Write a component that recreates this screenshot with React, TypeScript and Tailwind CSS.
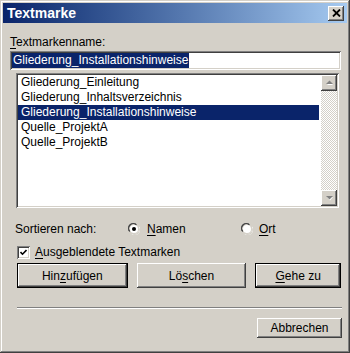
import React from "react";

const raised =
  "shadow-[inset_-1px_-1px_0_#404040,inset_1px_1px_0_#ffffff,inset_-2px_-2px_0_#808080,inset_2px_2px_0_#d4d0c8]";
const sunken =
  "shadow-[inset_1px_1px_0_#808080,inset_-1px_-1px_0_#ffffff,inset_2px_2px_0_#404040,inset_-2px_-2px_0_#d4d0c8]";

function U({ children }: { children: React.ReactNode }) {
  return <span className="underline underline-offset-[2px]">{children}</span>;
}

function Radio({ checked }: { checked?: boolean }) {
  return (
    <svg width="12" height="12" viewBox="0 0 12 12" className="shrink-0">
      <path d="M1 8 A5.2 5.2 0 0 1 8 1" stroke="#808080" strokeWidth="1.2" fill="none" />
      <path d="M2 8.5 A4.2 4.2 0 0 1 8.5 2" stroke="#404040" strokeWidth="1.2" fill="none" />
      <circle cx="6" cy="6" r="4" fill="#ffffff" />
      <path d="M11 4 A5.2 5.2 0 0 1 4 11" stroke="#ffffff" strokeWidth="1.2" fill="none" />
      <path d="M10 3.5 A4.2 4.2 0 0 1 3.5 10" stroke="#d4d0c8" strokeWidth="1.2" fill="none" />
      {checked && <circle cx="6" cy="6" r="2" fill="#000000" />}
    </svg>
  );
}

function Btn({
  children,
  def,
  className,
}: {
  children: React.ReactNode;
  def?: boolean;
  className?: string;
}) {
  if (def) {
    return (
      <div className={`border border-black bg-[#d4d0c8] ${className ?? ""}`}>
        <div className={`w-full h-full flex items-center justify-center ${raised}`}>{children}</div>
      </div>
    );
  }
  return (
    <div className={`bg-[#d4d0c8] flex items-center justify-center ${raised} ${className ?? ""}`}>
      {children}
    </div>
  );
}

function ScrollBtn({ up }: { up?: boolean }) {
  return (
    <div className={`w-[16px] h-[16px] bg-[#d4d0c8] flex items-center justify-center ${raised}`}>
      <svg width="9" height="6" viewBox="0 0 9 6">
        {up ? (
          <>
            <path d="M2 5 L5 2 L8 5 Z" fill="#ffffff" />
            <path d="M1 4 L4.5 0.5 L8 4 Z" fill="#808080" />
          </>
        ) : (
          <>
            <path d="M2 2 L8 2 L5 5.5 Z" fill="#ffffff" />
            <path d="M1 1 L8 1 L4.5 4.5 Z" fill="#808080" />
          </>
        )}
      </svg>
    </div>
  );
}

export default function App() {
  const items = [
    "Gliederung_Einleitung",
    "Gliederung_Inhaltsverzeichnis",
    "Gliederung_Installationshinweise",
    "Quelle_ProjektA",
    "Quelle_ProjektB",
  ];
  return (
    <div
      className={`w-[350px] h-[353px] bg-[#d4d0c8] p-[3px] flex flex-col text-[12px] leading-[14px] text-black shadow-[inset_-1px_-1px_0_#404040,inset_1px_1px_0_#d4d0c8,inset_-2px_-2px_0_#808080,inset_2px_2px_0_#ffffff]`}
      style={{ fontFamily: '"Liberation Sans", Arial, sans-serif' }}
    >
      {/* Title bar */}
      <div className="h-[20px] shrink-0 flex items-center justify-between bg-gradient-to-r from-[#0a246a] to-[#a6caf0] pl-[4px] pr-[3px]">
        <span className="text-white font-bold text-[14px] leading-[16px]">Textmarke</span>
        <div className={`w-[16px] h-[15px] bg-[#d4d0c8] flex items-center justify-center ${raised}`}>
          <svg width="9" height="8" viewBox="0 0 9 8">
            <path d="M1 0.5 L8 7.5 M8 0.5 L1 7.5" stroke="#000" strokeWidth="1.8" />
          </svg>
        </div>
      </div>

      {/* Body */}
      <div className="flex flex-col pl-[7px] pr-[6px]">
        <div className="mt-[12px] h-[14px]">
          <U>T</U>extmarkenname:
        </div>
        <div className={`mt-[2px] h-[19px] bg-white flex items-center px-[2px] ${sunken}`}>
          <span className="bg-[#0a246a] text-white h-[15px] leading-[15px] pl-[1px] pr-[1px]">
            Gliederung_Installationshinweise
          </span>
        </div>

        <div className={`mt-[3px] ml-[6px] mr-[2px] h-[135px] bg-white p-[2px] flex ${sunken}`}>
          <div className="flex-1 flex flex-col">
            {items.map((it, i) => (
              <div
                key={it}
                className={`h-[15px] leading-[15px] pl-[3px] ${
                  i === 2 ? "bg-[#0a246a] text-white" : ""
                }`}
              >
                {it}
              </div>
            ))}
          </div>
          <div className="w-[16px] ml-[2px] flex flex-col bg-[repeating-conic-gradient(#ffffff_0_25%,#d4d0c8_0_50%)] bg-[length:2px_2px]">
            <ScrollBtn up />
            <div className="flex-1" />
            <ScrollBtn />
          </div>
        </div>

        <div className="mt-[14px] h-[14px] flex items-center">
          <span className="ml-[5px] w-[113px]">Sortieren nach:</span>
          <Radio checked />
          <span className="ml-[7px] w-[94px]">
            <U>N</U>amen
          </span>
          <Radio />
          <span className="ml-[6px]">
            <U>O</U>rt
          </span>
        </div>

        <div className="mt-[9px] h-[14px] flex items-center">
          <div className={`ml-[7px] w-[13px] h-[13px] bg-white flex items-center justify-center ${sunken}`}>
            <svg width="7" height="7" viewBox="0 0 7 7">
              <path d="M0.5 3 L2.5 5.2 L6.5 1" stroke="#000" strokeWidth="1.6" fill="none" />
            </svg>
          </div>
          <span className="ml-[5px]">
            <U>A</U>usgeblendete Textmarken
          </span>
        </div>

        <div className="mt-[4px] h-[25px] flex">
          <Btn def className="ml-[7px] w-[111px] h-full">
            Hin<U>z</U>ufügen
          </Btn>
          <Btn className="ml-[9px] w-[110px] h-full">
            Lö<U>s</U>chen
          </Btn>
          <Btn def className="ml-[9px] w-[86px] h-full">
            <U>G</U>ehe zu
          </Btn>
        </div>

        <div className="mt-[19px] ml-[7px] mr-[-1px] h-[2px] border-t border-t-[#808080] border-b border-b-white" />

        <div className="mt-[9px] flex justify-end mr-[-1px]">
          <Btn className="w-[85px] h-[20px]">Abbrechen</Btn>
        </div>
      </div>
    </div>
  );
}
